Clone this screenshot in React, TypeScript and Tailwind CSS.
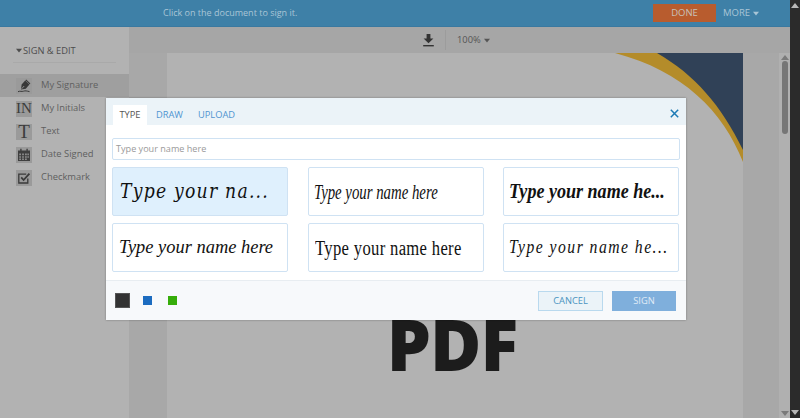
const PenIcon = () => (
    <svg width="14" height="14" viewBox="0 0 14 14" fill="#383838">
        <path d="M8.2 1.6 12.4 5.4 8.8 9.8 4 10.4 4.6 5.6Z" />
        <path d="M9.2 0.6 13.4 4.6 12.6 5.2 8.4 1.3Z" />
        <path d="M4.6 9.8 7.2 7" stroke="#9a9a9a" strokeWidth="0.9" />
        <path d="M1 12.7C3.5 11.6 4.5 12.9 6.5 12.2S9.5 12 12.5 12.6" stroke="#383838" strokeWidth="1" fill="none" />
    </svg>
);

const CalendarIcon = () => (
    <svg width="14" height="14" viewBox="0 0 14 14">
        <path d="M1 2.5H13V13H1Z" fill="#3f3f3f" />
        <path d="M3.2 0.8H4.6V3.4H3.2ZM9.4 0.8H10.8V3.4H9.4Z" fill="#3f3f3f" />
        <path d="M2.2 5.6H4V7.2H2.2ZM5.1 5.6H6.9V7.2H5.1ZM8 5.6H9.8V7.2H8ZM10.4 5.6H11.9V7.2H10.4ZM2.2 8.2H4V9.8H2.2ZM5.1 8.2H6.9V9.8H5.1ZM8 8.2H9.8V9.8H8ZM10.4 8.2H11.9V9.8H10.4ZM2.2 10.6H4V12H2.2ZM5.1 10.6H6.9V12H5.1ZM8 10.6H9.8V12H8Z" fill="#8c8c8c" />
    </svg>
);

const CheckIcon = () => (
    <svg width="14" height="14" viewBox="0 0 14 14" fill="none" stroke="#3a3a3a">
        <path d="M10.8 7.6V12H1.8V3.2H9.2" strokeWidth="1.3" />
        <path d="M4.2 6.4 6.6 9 12.4 2.6" strokeWidth="1.8" />
    </svg>
);

const DownloadIcon = () => (
    <svg width="11" height="13" viewBox="0 0 11 13" fill="#333">
        <path d="M3.6 0H7.4V4.4H10.4L5.5 9.2 0.6 4.4H3.6Z" />
        <path d="M0.2 11H10.8V12.4H0.2Z" />
    </svg>
);

const CloseIcon = () => (
    <svg width="9" height="9" viewBox="0 0 9 9" stroke="#1c7ab5" strokeWidth="1.5" className="absolute right-[7px] top-[11px]">
        <path d="M0.8 0.8 8.2 8.2M8.2 0.8 0.8 8.2" />
    </svg>
);

const sidebarItems = [
    { label: 'My Signature', active: true, icon: <PenIcon /> },
    { label: 'My Initials', icon: <span className="font-['Liberation_Serif',serif] text-[15px] leading-none">IN</span> },
    { label: 'Text', icon: <span className="font-['Liberation_Serif',serif] text-[19px] leading-none">T</span> },
    { label: 'Date Signed', icon: <CalendarIcon /> },
    { label: 'Checkmark', icon: <CheckIcon /> },
];

const signatures = [
    { text: 'Type your na...', box: 'pl-[7px]', cls: "font-['DejaVu_Serif',serif] italic text-[21px] tracking-[1.5px] scale-x-[0.82]", active: true },
    { text: 'Type your name here', box: 'pl-[5px]', cls: "font-['Liberation_Serif',serif] italic text-[20px] scale-x-[0.74]" },
    { text: 'Type your name he...', box: 'pl-[5px]', cls: "font-['Liberation_Serif',serif] italic font-bold text-[21px] scale-x-[0.86]" },
    { text: 'Type your name here', box: 'pl-[6px]', cls: "font-['Liberation_Serif',serif] italic text-[19px] scale-x-[0.97]" },
    { text: 'Type your name here', box: 'pl-[6px]', cls: "font-['Liberation_Serif',serif] text-[20px] tracking-[0.4px] scale-x-[0.83]" },
    { text: 'Type your name he...', box: 'pl-[5px]', cls: "font-['Liberation_Serif',serif] italic text-[18px] tracking-[1.7px] scale-x-[0.87]" },
];

function ArrowUp({ className }: { className: string }) {
    return <div className={`w-0 h-0 border-x-[4px] border-x-transparent border-b-[5px] ${className}`} />;
}

function ArrowDown({ className }: { className: string }) {
    return <div className={`w-0 h-0 border-x-[4px] border-x-transparent border-t-[5px] ${className}`} />;
}

export default function App() {
    return (
        <div className="relative w-[800px] h-[418px] overflow-hidden flex bg-[#a8a8a8] font-['Open_Sans',sans-serif] text-[#555]">
            <div className="w-[790px] flex flex-col">

                {/* Top bar */}
                <div className="h-[27px] shrink-0 bg-[#3e80a7] border-b border-[#3a79a0] flex items-center text-[#a9c5d6] text-[9px]">
                    <span className="ml-[163px]">Click on the document to sign it.</span>
                    <div className="ml-auto mr-[30px] flex items-center">
                        <div className="w-[63px] h-[18px] bg-[#b85c2e] text-[#c9c0b8] flex items-center justify-center text-[9.5px]">DONE</div>
                        <span className="ml-[7px] w-[25px] text-[9.5px]">MORE</span>
                        <ArrowDown className="ml-[4px] scale-75 border-t-[#a9c5d6]" />
                    </div>
                </div>

                <div className="flex-1 flex min-h-0">
                    {/* Sidebar */}
                    <div className="w-[129px] shrink-0 bg-[#b2b2b2] pt-[17px] flex flex-col">
                        <div className="mx-[13px] pb-[5px] border-b border-[#a9a9a9] flex items-center h-[19px] text-[9.3px] text-[#4d4d4d]">
                            <ArrowDown className="ml-[2px] scale-75 border-t-[#4d4d4d]" />
                            <span>SIGN &amp; EDIT</span>
                        </div>
                        <div className="mt-[11px] flex flex-col">
                            {sidebarItems.map(item => (
                                <div key={item.label} className={`h-[23px] flex items-center pl-[16px] ${item.active ? 'bg-[#9f9f9f]' : ''}`}>
                                    <div className="w-[16px] h-[16px] bg-[#9a9a9a] flex items-center justify-center text-[#3c3c3c]">
                                        {item.icon}
                                    </div>
                                    <span className="ml-[9px] text-[9.4px] text-[#5f5f5f]">{item.label}</span>
                                </div>
                            ))}
                        </div>
                    </div>

                    <div className="flex-1 flex flex-col min-w-0">
                        {/* Toolbar */}
                        <div className="h-[26px] shrink-0 flex items-center bg-[#a6a6a6] text-[#555]">
                            <div className="ml-[290px] w-[18px] flex justify-center">
                                <DownloadIcon />
                            </div>
                            <div className="ml-[8px] w-px h-[20px] bg-[#9c9c9c]" />
                            <span className="ml-[11px] text-[9.3px]">100%</span>
                            <ArrowDown className="ml-[2px] scale-75 border-t-[#555]" />
                        </div>

                        <div className="flex-1 flex min-h-0">
                            {/* Document page */}
                            <div className="relative ml-[38px] w-[576px] bg-[#b2b2b2] overflow-hidden flex flex-col items-center">
                                <svg className="absolute right-0 top-0" width="128" height="110" viewBox="0 0 128 110">
                                    <path d="M0 0H128V109C108 58 68 18 0 0Z" fill="#b48c2a" />
                                    <path d="M42 0H128V97C106 52 80 22 42 0Z" fill="#304157" />
                                </svg>
                                <div className="mt-[256px] ml-[-6px] text-[70px] leading-[70px] font-extrabold text-[#1c1c1c] tracking-[-1px]">PDF</div>
                            </div>
                            <div className="flex-1" />
                            {/* Inner scrollbar */}
                            <div className="w-[11px] bg-[#b0b0b0] flex flex-col items-center pt-[2px] pb-[2px]">
                                <ArrowUp className="border-b-[#7a7a7a]" />
                                <div className="mt-[1px] w-[6px] h-[73px] rounded-full bg-[#767676]" />
                                <div className="mt-auto"><ArrowDown className="border-t-[#7a7a7a]" /></div>
                            </div>
                        </div>
                    </div>
                </div>
            </div>

            {/* Outer scrollbar */}
            <div className="w-[10px] bg-[#2b2b2b] flex flex-col items-center justify-between py-[3px]">
                <ArrowUp className="border-b-[#b8b8b8]" />
                <ArrowDown className="border-t-[#b8b8b8]" />
            </div>

            {/* Sign dialog */}
            <div className="absolute left-[106px] top-[98px] w-[580px] h-[222px] bg-white flex flex-col shadow-[0_0_2px_rgba(0,0,0,0.35)]">
                <div className="h-[27px] shrink-0 bg-[#ebf3f8] flex items-end pl-[7px] relative">
                    <div className="w-[34px] h-[20px] bg-white flex items-center justify-center text-[9.3px] font-medium text-[#555]">TYPE</div>
                    <span className="ml-[9px] h-[20px] flex items-center text-[9.3px] font-medium text-[#4f94d0]">DRAW</span>
                    <span className="ml-[15px] h-[20px] flex items-center text-[9.3px] font-medium text-[#4f94d0]">UPLOAD</span>
                    <CloseIcon />
                </div>

                <div className="px-[6px] pt-[13px]">
                    <div className="h-[22px] border border-[#cfe2f3] rounded-[2px] flex items-center pl-[3px] text-[9.1px] text-[#9a9a9a]">
                        Type your name here
                    </div>
                    <div className="mt-[7px] grid grid-cols-3 gap-x-[19.5px] gap-y-[7px] w-[567px]">
                        {signatures.map((sig, i) => (
                            <div
                                key={i}
                                className={`h-[49px] border rounded-[2px] flex items-center whitespace-nowrap overflow-hidden text-[#111] border-[#cfe2f3] ${sig.box} ${sig.active ? 'bg-[#dff0fd]' : 'bg-white'}`}
                            >
                                <span className={`inline-block origin-left ${sig.cls}`}>{sig.text}</span>
                            </div>
                        ))}
                    </div>
                </div>

                <div className="mt-auto h-[40px] border-t border-[#e8edf1] bg-[#f7f9fb] flex items-center pl-[9px] pr-[10px]">
                    <div className="w-[15px] h-[15px] bg-[#333] border border-[#555]" />
                    <div className="ml-[13px] w-[9px] h-[9px] bg-[#1c6cc0]" />
                    <div className="ml-[16px] w-[9px] h-[9px] bg-[#36ad0a]" />
                    <div className="ml-auto w-[65px] h-[20px] bg-[#ebf3f8] border border-[#b9d9ee] flex items-center justify-center text-[9.3px] font-medium text-[#4a94c0]">CANCEL</div>
                    <div className="ml-[9px] w-[64px] h-[20px] bg-[#7fafdc] flex items-center justify-center text-[9.3px] font-medium text-[#e0ecf7]">SIGN</div>
                </div>
            </div>
        </div>
    );
}
